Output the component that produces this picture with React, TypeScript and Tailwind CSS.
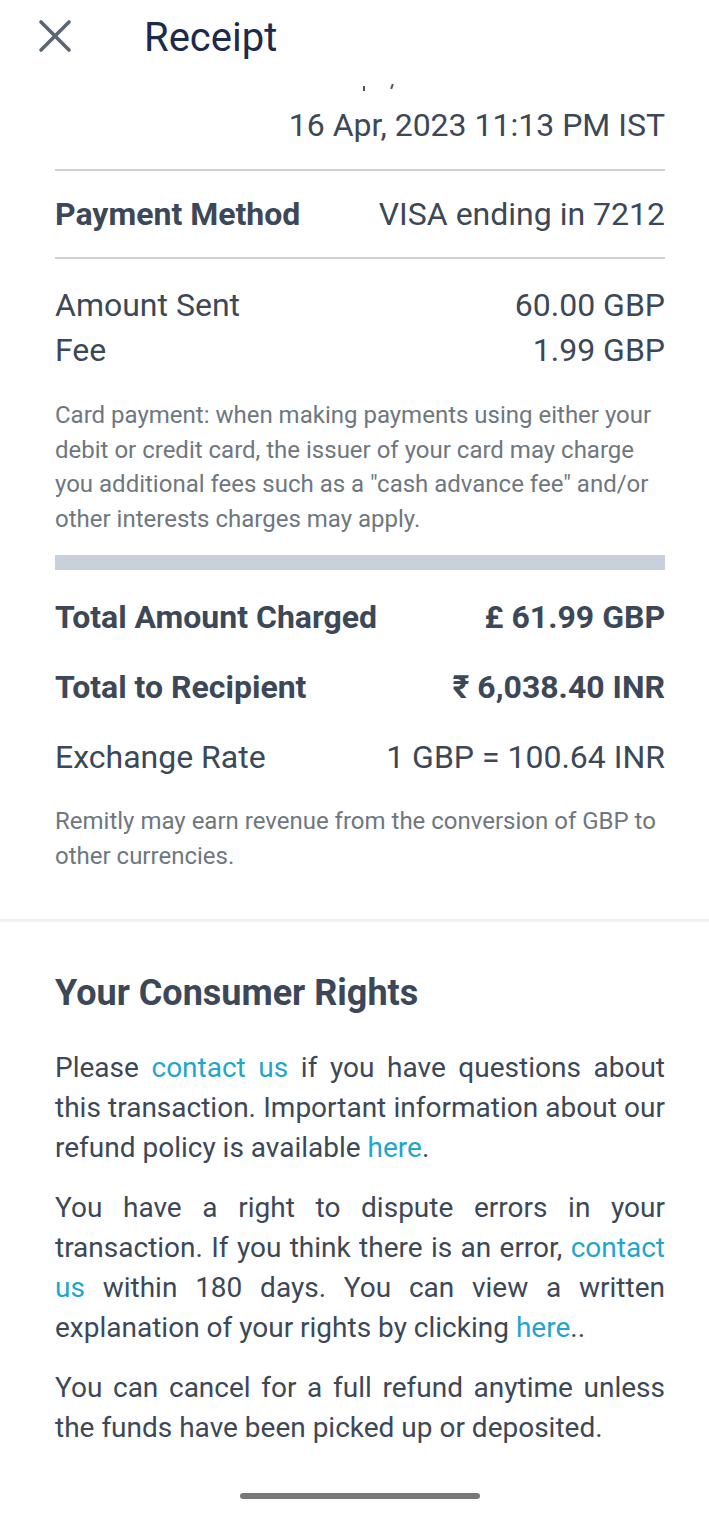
import React from "react";

const Row = ({ label, value, bold = false, h = "h-[45px]" }: { label: string; value: string; bold?: boolean; h?: string }) => (
  <div className={`flex ${h} items-center justify-between ${bold ? "font-bold" : ""}`}>
    <span>{label}</span>
    <span>{value}</span>
  </div>
);

const Link = ({ children }: { children: React.ReactNode }) => <span className="text-[#1fa6cc]">{children}</span>;

export default function App() {
  return (
    <div className="w-[709px] h-[1515px] bg-white text-[#3c4858] overflow-hidden" style={{ fontFamily: "Roboto, 'Noto Sans', sans-serif" }}>
      {/* Header */}
      <div className="flex h-[76px] items-center">
        <svg className="ml-[38px] mt-[-4px]" width="34" height="34" viewBox="0 0 34 34" fill="none" stroke="#5b6672" strokeWidth="3.6" strokeLinecap="round">
          <path d="M3 3 L31 31 M31 3 L3 31" />
        </svg>
        <span className="ml-[72px] text-[40px] leading-none text-[#1d2a4a]">Receipt</span>
      </div>

      <div className="pl-[55px] pr-[44px]">
        <div className="relative h-[20px]">
          <span className="absolute left-[308px] top-[10px] h-[5px] w-[2px] bg-[#555]" />
          <span className="absolute left-[336px] top-[8px] h-[5px] w-[2px] rotate-[20deg] bg-[#555]" />
        </div>
        <div className="flex h-[58px] items-center justify-end text-[32px]">16 Apr, 2023 11:13 PM IST</div>

        <div className="mt-[15px] h-[2px] bg-[#d0d0d0]" />
        <div className="flex h-[86px] items-center justify-between text-[32px]">
          <span className="font-bold">Payment Method</span>
          <span>VISA ending in 7212</span>
        </div>
        <div className="h-[2px] bg-[#d0d0d0]" />

        <div className="pt-[23px] text-[32px]">
          <Row label="Amount Sent" value="60.00 GBP" />
          <Row label="Fee" value="1.99 GBP" />
        </div>

        <p className="mt-[26px] text-[24px] leading-[34.5px] text-[#6e7780]">
          Card payment: when making payments using either your debit or credit card, the issuer of your card may charge you additional fees such as a "cash advance fee" and/or other interests charges may apply.
        </p>

        <div className="mt-[19px] h-[15px] bg-[#c8d1db]" />

        <div className="mt-[12px] text-[32px]">
          <Row label="Total Amount Charged" value="£ 61.99 GBP" bold h="h-[70px]" />
          <Row label="Total to Recipient" value="₹ 6,038.40 INR" bold h="h-[70px]" />
          <Row label="Exchange Rate" value="1 GBP = 100.64 INR" h="h-[70px]" />
        </div>

        <p className="mt-[12px] pb-[45px] text-[24px] leading-[35px] text-[#6e7780]">
          Remitly may earn revenue from the conversion of GBP to other currencies.
        </p>
      </div>

      <div className="h-[3px] bg-[#f1f1f1]" />

      <div className="pl-[55px] pr-[44px]">
        <h2 className="mt-[46px] h-[50px] text-[36px] font-bold leading-[50px]">Your Consumer Rights</h2>
        <div className="mt-[30px] flex flex-col gap-[20px] text-justify text-[28px] leading-[40px]">
          <p>
            Please <Link>contact us</Link> if you have questions about this transaction. Important information about our refund policy is available <Link>here</Link>.
          </p>
          <p>
            You have a right to dispute errors in your transaction. If you think there is an error, <Link>contact us</Link> within 180 days. You can view a written explanation of your rights by clicking <Link>here</Link>..
          </p>
          <p>You can cancel for a full refund anytime unless the funds have been picked up or deposited.</p>
        </div>
      </div>

      <div className="ml-[240px] mt-[45px] h-[6px] w-[240px] rounded-full bg-[#777]" />
    </div>
  );
}
